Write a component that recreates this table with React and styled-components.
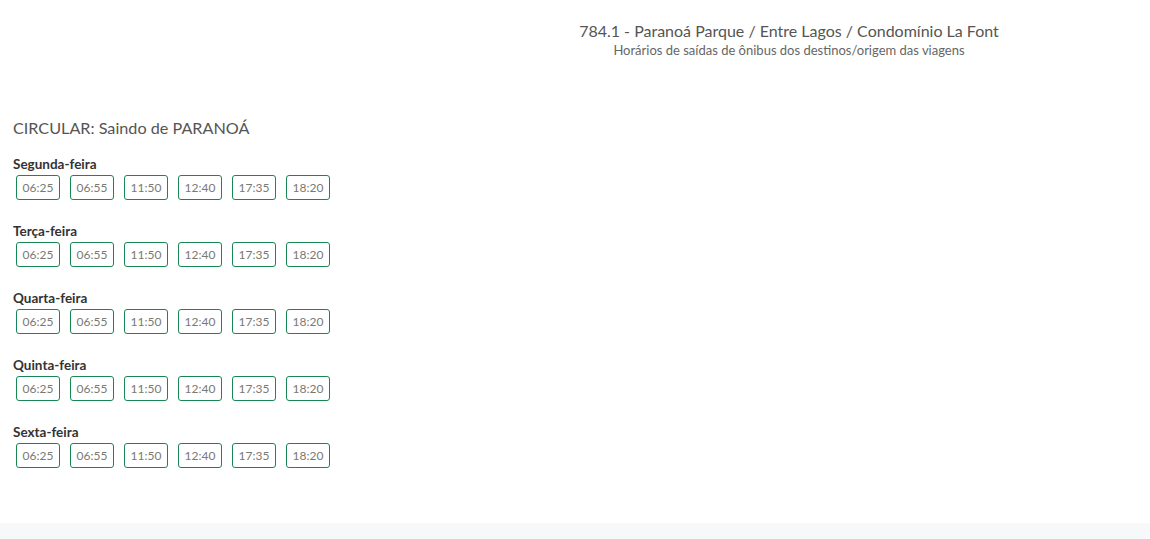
import styled, { createGlobalStyle } from 'styled-components';

const Global = createGlobalStyle`
  html, body { margin: 0; padding: 0; background: #fff; }
  body { font-family: "Lato", "Open Sans", "Liberation Sans", sans-serif; color: #333; }
`;

const dias = ['Segunda-feira', 'Terça-feira', 'Quarta-feira', 'Quinta-feira', 'Sexta-feira'];
const horarios = ['06:25', '06:55', '11:50', '12:40', '17:35', '18:20'];

const Page = styled.div`
  min-height: 539px;
  display: flex;
  flex-direction: column;
`;

const Header = styled.header`
  display: grid;
  grid-template-columns: 428px 1fr;
  padding-top: 20px;
`;

const HeaderText = styled.div`
  grid-column: 2;
  text-align: center;
  .title {
    font-size: 16px;
    color: #555;
    line-height: 22px;
  }
  .sub {
    font-size: 13px;
    color: #666;
    line-height: 16px;
  }
`;

const Main = styled.main`
  flex: 1;
  padding: 59px 13px 20px;
`;

const SectionTitle = styled.h2`
  margin: 0 0 17px;
  font-size: 16.2px;
  font-weight: 400;
  color: #555;
  line-height: 22px;
`;

const Day = styled.div`
  margin-bottom: 23px;
`;

const DayLabel = styled.div`
  font-size: 13.5px;
  font-weight: 700;
  color: #333;
  line-height: 16px;
  margin-bottom: 3px;
`;

const Times = styled.div`
  display: flex;
  gap: 10px;
  padding-left: 3px;
`;

const Time = styled.button`
  width: 44px;
  height: 25px;
  padding: 0;
  border: 1px solid #198754;
  border-radius: 3px;
  background: #fff;
  color: #7a7a72;
  font-family: inherit;
  font-size: 12px;
  cursor: pointer;
`;

const Footer = styled.footer`
  height: 16px;
  background: #f7f8fa;
`;

export default function App() {
  return (
    <Page>
      <Global />
      <Header>
        <HeaderText>
          <div className="title">784.1 - Paranoá Parque / Entre Lagos / Condomínio La Font</div>
          <div className="sub">Horários de saídas de ônibus dos destinos/origem das viagens</div>
        </HeaderText>
      </Header>
      <Main>
        <SectionTitle>CIRCULAR: Saindo de PARANOÁ</SectionTitle>
        {dias.map(d => (
          <Day key={d}>
            <DayLabel>{d}</DayLabel>
            <Times>
              {horarios.map(h => <Time key={h}>{h}</Time>)}
            </Times>
          </Day>
        ))}
      </Main>
      <Footer />
    </Page>
  );
}
